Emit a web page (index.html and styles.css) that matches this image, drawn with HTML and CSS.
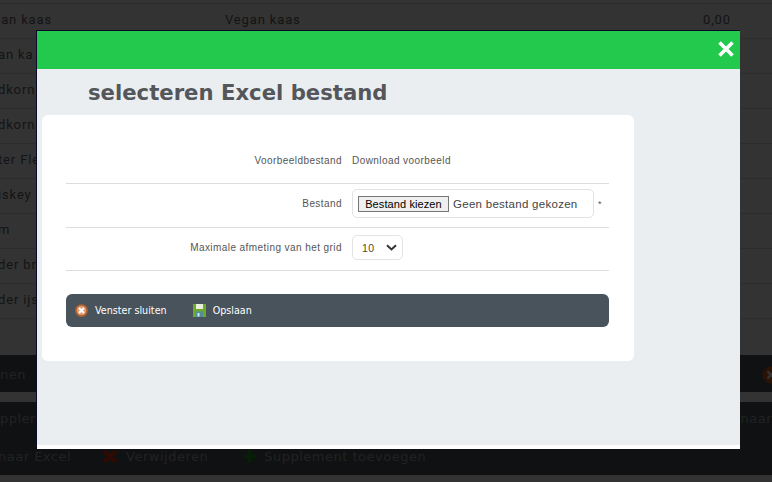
FILE: index.html
```html
<!DOCTYPE html>
<html lang="nl">
<head>
<meta charset="utf-8">
<title>selecteren Excel bestand</title>
<link rel="stylesheet" href="styles.css">
</head>
<body>
<div class="page">
  <div class="rows">
    <div class="row first"><span class="c1 cut">gan kaas</span><span class="c2">Vegan kaas</span><span class="c3">0,00</span></div>
    <div class="row"><span class="c1">an ka</span></div>
    <div class="row"><span class="c1">dkorn</span></div>
    <div class="row"><span class="c1">dkorn</span></div>
    <div class="row"><span class="c1">ter Fle</span></div>
    <div class="row"><span class="c1">iskey</span></div>
    <div class="row"><span class="c1">m</span></div>
    <div class="row"><span class="c1">der br</span></div>
    <div class="row"><span class="c1">der ijs</span></div>
    <div class="row"></div>
  </div>
  <div class="bar bar-one">
    <span>nen</span>
    <svg class="bar-end" width="18" height="18" viewBox="0 0 18 18"><circle cx="9" cy="9" r="8.5" fill="#d2601e"/><path d="M5.5 5.5l7 7m0-7l-7 7" stroke="#fff" stroke-width="2.4"/></svg>
  </div>
  <div class="bar bar-two">
    <div class="bar-line"><span>pplen</span><span>naar</span></div>
    <div class="bar-actions">
      <span>naar Excel</span>
      <span class="action"><svg width="16" height="15" viewBox="0 0 16 15"><path d="M2 2l12 11m0-11L2 13" stroke="#e8340c" stroke-width="4"/></svg>Verwijderen</span>
      <span class="action action-add"><svg width="13" height="13" viewBox="0 0 13 13"><path d="M6.5 0v13M0 6.5h13" stroke="#1f9a1f" stroke-width="3.4"/></svg>Supplement toevoegen</span>
    </div>
  </div>
</div>
<div class="overlay"></div>
<section class="modal">
  <header class="modal-head">
    <svg class="close" width="18" height="18" viewBox="0 0 18 18"><path d="M2.5 2.5l13 13m0-13l-13 13" stroke="#fff" stroke-width="3.6"/></svg>
  </header>
  <div class="modal-body">
    <h1 class="title">selecteren Excel bestand</h1>
    <div class="card">
      <div class="form-row row-a">
        <div class="label">Voorbeeldbestand</div>
        <div class="value">Download voorbeeld</div>
      </div>
      <div class="form-row row-b">
        <div class="label">Bestand</div>
        <div class="value">
          <div class="file"><button class="file-btn" type="button">Bestand kiezen</button><span class="file-name">Geen bestand gekozen</span></div>
          <span class="req">*</span>
        </div>
      </div>
      <div class="form-row row-c">
        <div class="label">Maximale afmeting van het grid</div>
        <div class="value">
          <div class="select"><span>10</span><svg width="11" height="7" viewBox="0 0 11 7"><path d="M1 1.2l4.5 4.2L10 1.2" fill="none" stroke="#333" stroke-width="2"/></svg></div>
        </div>
      </div>
      <div class="toolbar">
        <span class="tool">
          <svg width="13" height="13" viewBox="0 0 13 13"><circle cx="6.5" cy="6.5" r="6.3" fill="#b8642f"/><circle cx="6.5" cy="6.5" r="4.6" fill="#e0a078"/><path d="M4 4l5 5m0-5l-5 5" stroke="#fff" stroke-width="1.8"/></svg>
          Venster sluiten
        </span>
        <span class="tool">
          <svg width="13" height="13" viewBox="0 0 13 13"><rect width="13" height="13" fill="#6fa82a"/><rect x="3" y="0" width="7" height="5" fill="#e6f0dc"/><rect x="3" y="7.5" width="7" height="5.5" fill="#4f8f9a"/><rect x="4.5" y="9" width="2" height="3.5" fill="#d9e6e8"/></svg>
          Opslaan
        </span>
      </div>
    </div>
  </div>
  <div class="modal-foot"></div>
</section>
</body>
</html>
```

FILE: styles.css
```css
* { box-sizing: border-box; }
html, body { margin: 0; height: 482px; overflow: hidden; background: #fff; }
body { font-family: "Liberation Sans", Arial, sans-serif; color: #555; }

.page { height: 482px; overflow: hidden; display: flex; flex-direction: column; padding-top: 3px; }
.rows { height: 352px; flex: none; }
.row { height: 35px; border-top: 1px solid #ddd; display: flex; align-items: center; font-family: Roboto, sans-serif; font-size: 13px; letter-spacing: .85px; color: #666; padding-bottom: 3px; }
.c1 { width: 227px; margin-left: -2px; flex: none; }
.c2 { width: 478px; flex: none; }
.c3 { flex: none; }
.cut { margin-left: -7px; width: 232px; }

.bar { background: #4b555c; color: #aaa; font-family: "DejaVu Sans", sans-serif; font-size: 13px; letter-spacing: .5px; flex: none; }
.bar-one { height: 37px; display: flex; justify-content: space-between; align-items: center; padding-top: 2px; }
.bar-end { margin-right: -8px; }
.bar-two { height: 73px; margin-top: 10px; padding-top: 9px; }
.bar-line { display: flex; justify-content: space-between; height: 36px; }
.bar-actions { display: flex; gap: 31px; align-items: center; height: 18px; margin-left: -2px; }
.action { display: inline-flex; align-items: center; gap: 8px; }
.action-add { margin-left: 4px; }

.overlay { position: fixed; inset: 0; background: rgba(0, 0, 0, .8); }

.modal { position: absolute; left: 36px; top: 30px; width: 704px; height: 419px; border-left: 1px solid #0a0a2a; border-top: 1px solid #0a0a2a; background: #eaeef1; display: flex; flex-direction: column; }
.modal-head { height: 38px; flex: none; background: #22c94d; display: flex; justify-content: flex-end; align-items: center; padding-right: 5px; }
.close { margin-bottom: 3px; }
.modal-body { flex: 1; padding: 0 0 0 5px; }
.modal-foot { height: 4px; flex: none; background: #fff; }
.title { margin: 9px 0 0 46px; height: 37px; font-family: "DejaVu Sans", sans-serif; font-weight: 700; font-size: 21.2px; line-height: 30px; color: #54565a; }

.card { width: 592px; height: 246px; background: #fff; border-radius: 6px; padding: 24px 25px 0 24px; }
.form-row { display: flex; align-items: center; border-bottom: 1px solid #ddd; font-size: 10px; letter-spacing: .43px; color: #555; }
.row-a { height: 45px; padding-bottom: 2px; }
.row-b { height: 44px; padding-bottom: 4px; }
.row-c { height: 43px; padding-bottom: 3px; }
.label { width: 276px; text-align: right; flex: none; }
.value { display: flex; align-items: center; margin-left: 10px; }
.file { width: 242px; height: 29px; border: 1px solid #e3e3e3; border-radius: 5px; display: flex; align-items: center; padding-left: 5px; font-size: 11.5px; }
.file-btn { width: 91px; height: 16px; padding: 0; border: 1px solid #767676; border-radius: 0; background: #efefef; color: #000; font: 11px "Liberation Sans", Arial, sans-serif; line-height: 14px; letter-spacing: .1px; }
.file-name { margin-left: 4px; letter-spacing: .28px; color: #444; white-space: nowrap; }
.req { margin-left: 4px; font-size: 9px; }
.select { width: 51px; height: 25px; border: 1px solid #e3e3e3; border-radius: 5px; display: flex; align-items: center; justify-content: space-between; padding: 0 5px 0 9px; font-size: 10.5px; color: #5a4a1a; }

.toolbar { margin-top: 23px; height: 33px; background: #49535b; border-radius: 6px; display: flex; align-items: center; gap: 26px; padding: 0 0 0 9px; }
.tool { display: inline-flex; align-items: center; gap: 7px; color: #fff; font-family: "DejaVu Sans", sans-serif; font-size: 9.6px; }
```
